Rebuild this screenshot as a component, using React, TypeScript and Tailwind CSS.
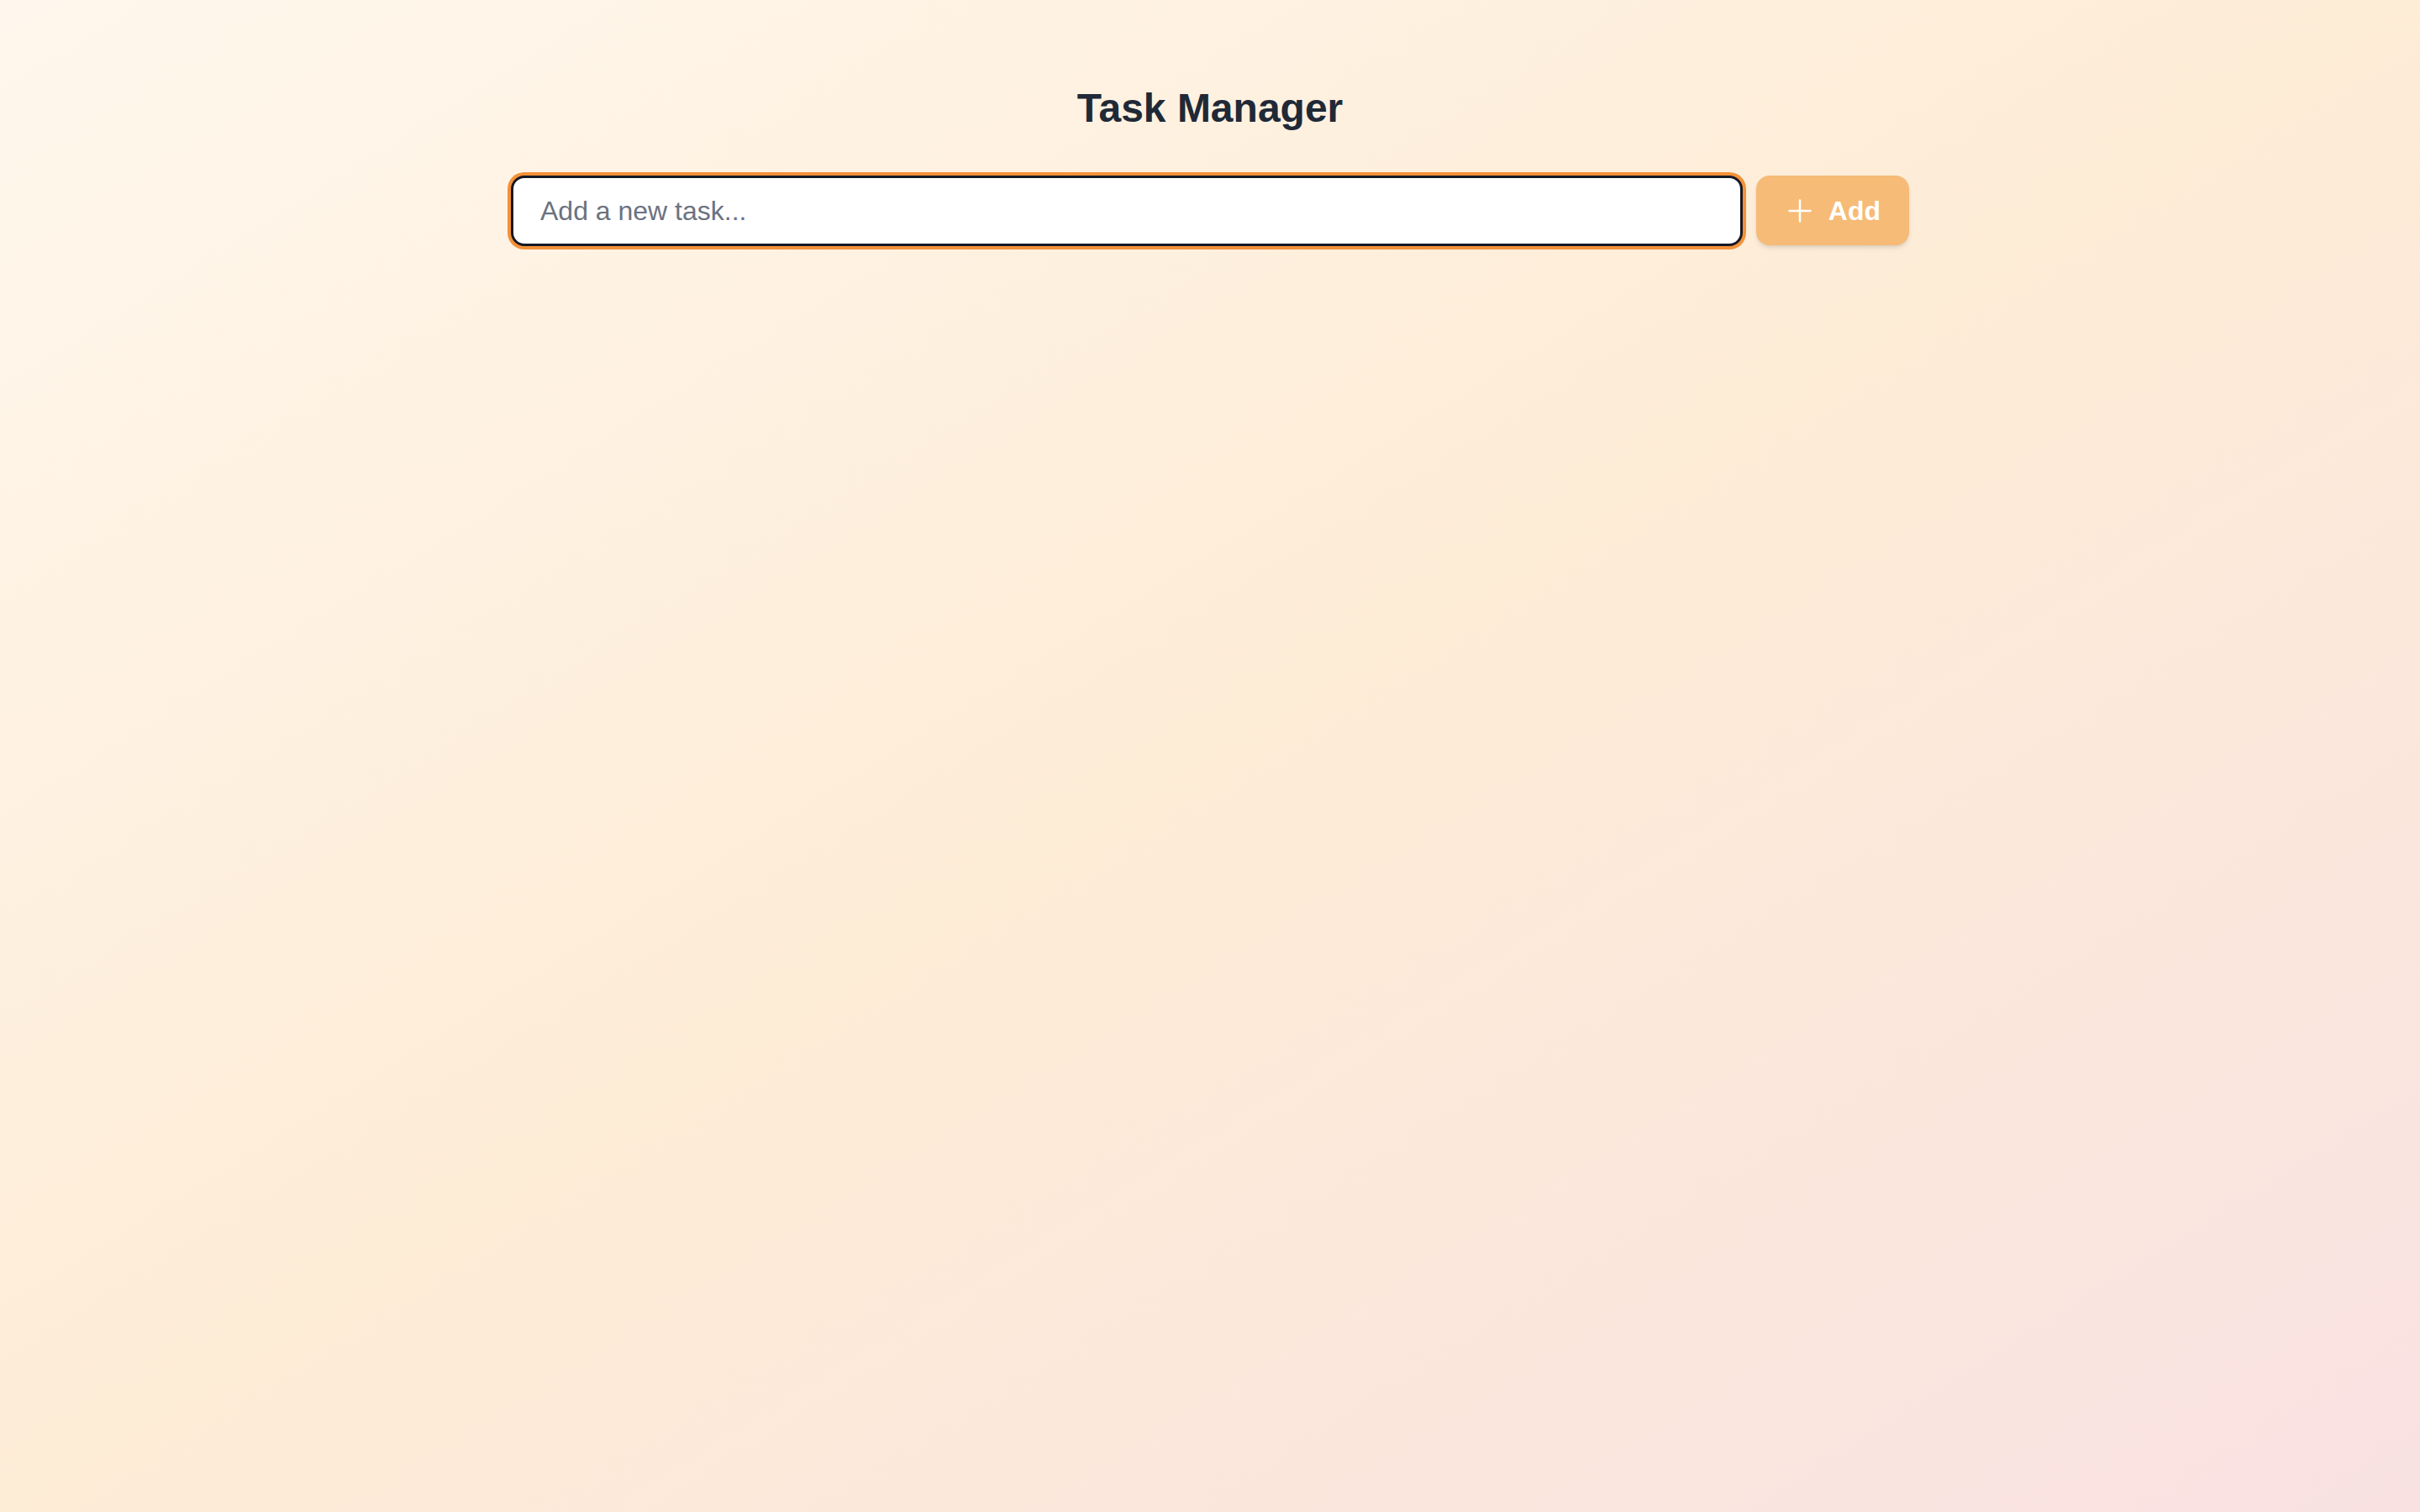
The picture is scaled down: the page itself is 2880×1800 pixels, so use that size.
import React, { useState } from 'react';

const PlusIcon = () => (
  <svg width="28" height="28" viewBox="0 0 28 28" fill="none" stroke="currentColor" strokeWidth="2.5" strokeLinecap="round">
    <path d="M14 1.5v25" />
    <path d="M1.5 14h25" />
  </svg>
);

const App = () => {
  const [task, setTask] = useState('');

  return (
    <div className="min-h-screen bg-gradient-to-br from-[#fff7ed] via-[#fdecd6] to-[#f9e1e2] font-['Liberation_Sans',Arial,sans-serif]">
      <div className="max-w-[1792px] mx-auto px-16 pt-[97px]">
        <h1 className="text-[48px] leading-[64px] font-bold text-[#1f2937] text-center mb-12">Task Manager</h1>

        <div className="flex items-start gap-4">
          <input
            type="text"
            value={task}
            onChange={(e) => setTask(e.target.value)}
            placeholder="Add a new task..."
            className="flex-1 h-[84px] px-8 text-[32px] leading-[48px] text-[#1f2937] bg-white border-[3px] border-[#161824] rounded-2xl outline-none ring-4 ring-[#f39139] placeholder-[#6b7280]"
          />
          <button
            type="button"
            className="flex items-center gap-5 h-[83px] pl-[38px] pr-[34px] rounded-2xl bg-[#f6bb76] text-white text-[32px] font-bold shadow-md"
          >
            <PlusIcon />
            <span>Add</span>
          </button>
        </div>
      </div>
    </div>
  );
};

export default App;
